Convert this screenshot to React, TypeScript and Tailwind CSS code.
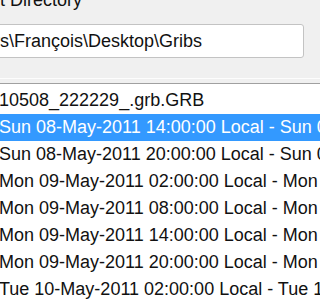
import React from "react";

const rows: string[] = [
  "10508_222229_.grb.GRB",
  "Sun 08-May-2011 14:00:00 Local - Sun 08-May-2011 12:00:00 UTC",
  "Sun 08-May-2011 20:00:00 Local - Sun 08-May-2011 18:00:00 UTC",
  "Mon 09-May-2011 02:00:00 Local - Mon 09-May-2011 00:00:00 UTC",
  "Mon 09-May-2011 08:00:00 Local - Mon 09-May-2011 06:00:00 UTC",
  "Mon 09-May-2011 14:00:00 Local - Mon 09-May-2011 12:00:00 UTC",
  "Mon 09-May-2011 20:00:00 Local - Mon 09-May-2011 18:00:00 UTC",
  "Tue 10-May-2011 02:00:00 Local - Tue 10-May-2011 00:00:00 UTC",
];

export default function App() {
  return (
    <div className="w-[320px] h-[300px] overflow-hidden bg-[#f0f0f0] flex flex-col font-['Liberation_Sans',Arial,sans-serif] text-[18px] text-[#111]">
      <div className="h-[20px] leading-[20px] -mt-[10px] -ml-[55px] whitespace-nowrap shrink-0">
        Current Directory
      </div>
      <div className="mt-[14px] -ml-[67px] w-[371px] h-[34px] shrink-0 rounded-[3px] border border-[#c3c3c3] bg-white pl-[5px] flex items-center whitespace-nowrap leading-[20px]">
        C:\Users\François\Desktop\Gribs
      </div>
      <div className="mt-[20px] h-px shrink-0 bg-[#fdfdfd]" />
      <div className="mt-[4px] -ml-[20px] w-[360px] flex-1 bg-white border-t border-l border-[#a0a0a0] pt-[3px] flex flex-col">
        {rows.map((r, i) => (
          <div
            key={i}
            className={
              i === 1
                ? "h-[27px] leading-[27px] pl-[18px] whitespace-nowrap shrink-0 bg-[#3399ff] text-white"
                : "h-[27px] leading-[27px] pl-[18px] whitespace-nowrap shrink-0"
            }
          >
            {r}
          </div>
        ))}
      </div>
    </div>
  );
}
